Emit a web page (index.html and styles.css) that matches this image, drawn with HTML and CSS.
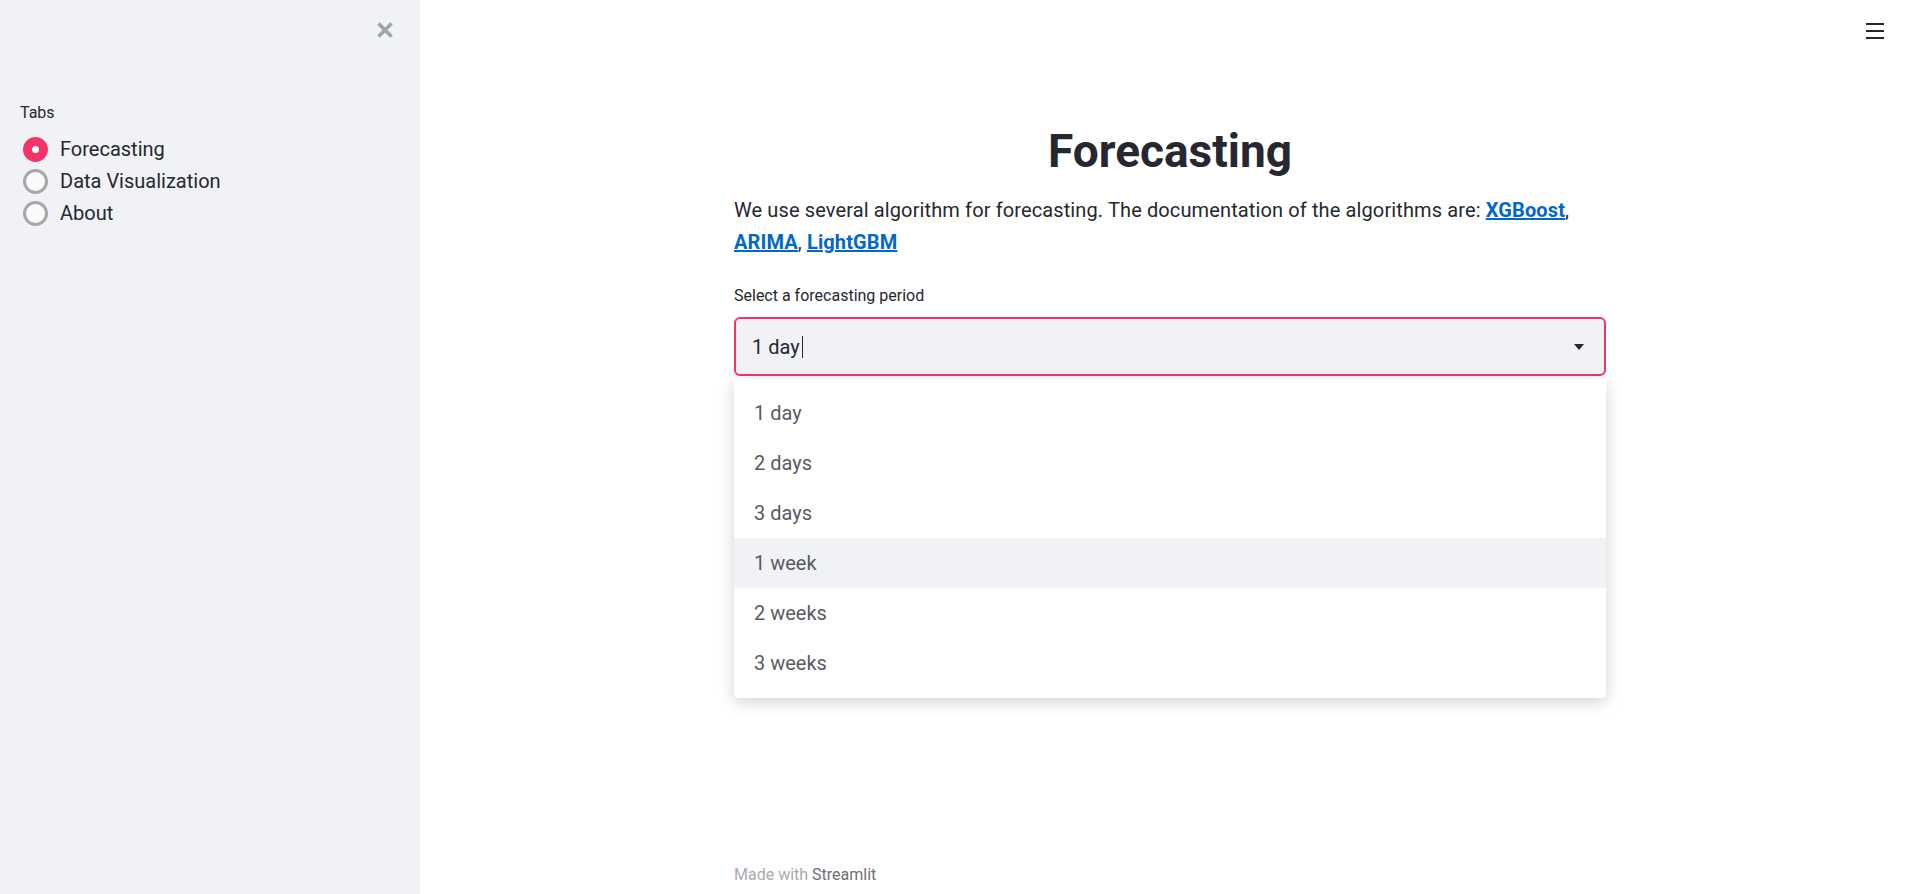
FILE: index.html
```html
<!DOCTYPE html>
<html lang="en">
<head>
<meta charset="utf-8">
<title>Forecasting</title>
<link rel="stylesheet" href="styles.css">
</head>
<body>
<aside class="sidebar">
  <div class="sb-head">
    <button class="close-btn" aria-label="Close sidebar">
      <svg width="18" height="18" viewBox="0 0 18 18"><path d="M2.5 2.5 L15.5 15.5 M15.5 2.5 L2.5 15.5" stroke="#a0a3ab" stroke-width="3.6" stroke-linecap="butt"/></svg>
    </button>
  </div>
  <div class="sb-body">
    <div class="field-label">Tabs</div>
    <div class="radio-group">
      <div class="radio-row"><span class="radio checked"></span><span class="radio-text">Forecasting</span></div>
      <div class="radio-row"><span class="radio"></span><span class="radio-text">Data Visualization</span></div>
      <div class="radio-row"><span class="radio"></span><span class="radio-text">About</span></div>
    </div>
  </div>
</aside>
<main class="main">
  <div class="toolbar">
    <svg width="18" height="18" viewBox="0 0 18 18"><rect x="0" y="1" width="18" height="2" fill="#262730"/><rect x="0" y="8" width="18" height="2" fill="#262730"/><rect x="0" y="15" width="18" height="2" fill="#262730"/></svg>
  </div>
  <div class="block">
    <h1 class="title">Forecasting</h1>
    <p class="desc">We use several algorithm for forecasting. The documentation of the algorithms are: <a href="#">XGBoost</a>, <a href="#">ARIMA</a>, <a href="#">LightGBM</a></p>
    <div class="field-label">Select a forecasting period</div>
    <div class="select-wrap">
      <div class="select">
        <span class="select-value">1 day</span><span class="caret"></span>
        <svg class="arrow" width="10" height="6" viewBox="0 0 10 6"><path d="M0 0 L10 0 L5 6 Z" fill="#262730"/></svg>
      </div>
      <ul class="menu">
        <li>1 day</li>
        <li>2 days</li>
        <li>3 days</li>
        <li class="hover">1 week</li>
        <li>2 weeks</li>
        <li>3 weeks</li>
      </ul>
    </div>
  </div>
  <footer class="footer">Made with <span class="brand">Streamlit</span></footer>
</main>
</body>
</html>
```
FILE: styles.css
```css
* { box-sizing: border-box; }
html, body { margin: 0; padding: 0; height: 100%; }
body {
  display: flex;
  font-family: Roboto, "Noto Sans", sans-serif;
  color: #262730;
  background: #fff;
  overflow: hidden;
}
.sidebar {
  width: 420px;
  flex: 0 0 420px;
  background: #f0f2f6;
  height: 100vh;
}
.sb-head {
  height: 60px;
  display: flex;
  justify-content: flex-end;
  align-items: center;
  padding-right: 26px;
}
.close-btn {
  border: 0;
  background: none;
  padding: 0;
  width: 18px;
  height: 18px;
  display: flex;
}
.sb-body { padding: 41px 20px 0 20px; }
.field-label {
  font-size: 16px;
  line-height: 24px;
  color: #262730;
}
.radio-group { margin-top: 8px; display: flex; flex-direction: column; }
.radio-row {
  height: 32px;
  display: flex;
  align-items: center;
  gap: 12px;
  padding-left: 3px;
}
.radio {
  width: 25px;
  height: 25px;
  border-radius: 50%;
  border: 3px solid #a6a6a8;
  background: #fafafa;
  flex: 0 0 auto;
}
.radio.checked {
  border: 9px solid #f63366;
  background: #fff;
}
.radio-text { font-size: 20px; color: #262730; }
.main {
  flex: 1;
  height: 100vh;
  display: flex;
  flex-direction: column;
  padding-left: 4px;
}
.toolbar {
  height: 40px;
  padding: 22px 32px 0 0;
  display: flex;
  justify-content: flex-end;
}
.block {
  width: 872px;
  margin: 0 auto;
  padding-top: 84px;
}
.title {
  margin: 0;
  text-align: center;
  font-size: 46px;
  line-height: 54px;
  font-weight: 700;
  color: #262730;
}
.desc {
  margin: 16px 0 26px;
  font-size: 20px;
  line-height: 32px;
  letter-spacing: 0.12px;
}
.desc a {
  color: #0068c9;
  font-weight: 700;
  text-decoration: underline;
}
.select-wrap { position: relative; margin-top: 9px; }
.select {
  height: 59px;
  border: 2px solid #f63366;
  border-radius: 6px;
  background: #f0f2f6;
  display: flex;
  align-items: center;
  padding: 0 20px 0 16px;
  font-size: 20px;
}
.select-value { color: #262730; }
.caret {
  width: 1px;
  height: 22px;
  background: #262730;
  margin-left: 2px;
}
.arrow { margin-left: auto; }
.menu {
  position: absolute;
  left: 0;
  right: 0;
  top: 62px;
  margin: 0;
  padding: 9px 0 10px;
  list-style: none;
  background: #fff;
  border-radius: 4px;
  box-shadow: 0 4px 16px rgba(0, 0, 0, 0.18);
}
.menu li {
  height: 50px;
  line-height: 50px;
  padding-left: 20px;
  font-size: 20px;
  color: #5a5b63;
}
.menu li.hover { background: #f0f2f6; }
.footer {
  margin: auto auto 0;
  width: 872px;
  font-size: 16px;
  line-height: 24px;
  padding-bottom: 7px;
  color: #a9aab0;
}
.brand { color: #6e6f76; }
```
